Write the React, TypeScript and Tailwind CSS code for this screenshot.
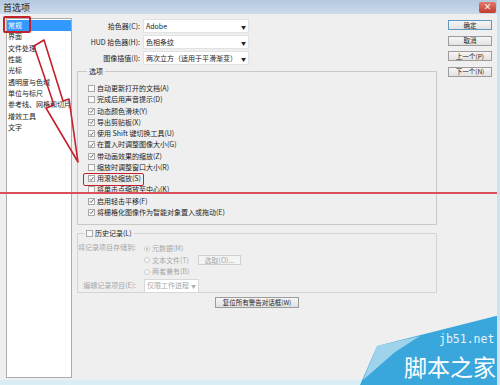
import React from "react";

const navItems = [
  "常规",
  "界面",
  "文件处理",
  "性能",
  "光标",
  "透明度与色域",
  "单位与标尺",
  "参考线、网格和切片",
  "增效工具",
  "文字",
];

const options: [string, boolean][] = [
  ["自动更新打开的文档(A)", false],
  ["完成后用声音提示(D)", false],
  ["动态颜色滑块(Y)", true],
  ["导出剪贴板(X)", true],
  ["使用 Shift 键切换工具(U)", true],
  ["在置入时调整图像大小(G)", true],
  ["带动画效果的缩放(Z)", true],
  ["缩放时调整窗口大小(R)", false],
  ["用滚轮缩放(S)", true],
  ["将单击点缩放至中心(K)", false],
  ["启用轻击平移(F)", true],
  ["将栅格化图像作为智能对象置入或拖动(E)", true],
];

function Check({ on, dim }: { on: boolean; dim?: boolean }) {
  return (
    <span
      className={`flex h-[7px] w-[7px] shrink-0 items-center justify-center border bg-[#fafafa] ${
        dim ? "border-[#c4c4c4]" : "border-[#a9a9a9]"
      }`}
    >
      {on && (
        <svg width="6" height="6" viewBox="0 0 6 6">
          <path d="M0.8 3.2 L2.4 4.8 L5.3 0.9" fill="none" stroke="#555" strokeWidth="1" />
        </svg>
      )}
    </span>
  );
}

function Radio({ on }: { on?: boolean }) {
  return (
    <span className="flex h-[6px] w-[6px] shrink-0 items-center justify-center rounded-full border border-[#cfcfcf] bg-[#f7f7f7]">
      {on && <span className="h-[2px] w-[2px] rounded-full bg-[#b5b5b5]" />}
    </span>
  );
}

function Select({ value, width, dim }: { value: string; width: string; dim?: boolean }) {
  return (
    <div
      className={`flex h-[14px] items-center justify-between border bg-white pl-[2px] pr-[2px] ${width} ${
        dim ? "border-[#d8d8d8] text-[#a8a8a8]" : "border-[#e2e2e2]"
      }`}
    >
      <span className="whitespace-nowrap">{value}</span>
      <span className={`text-[5px] ${dim ? "text-[#b0b0b0]" : "text-[#222]"}`}>▼</span>
    </div>
  );
}

function SideButton({ label, primary }: { label: string; primary?: boolean }) {
  return (
    <div
      className={`flex h-[10px] w-[44px] items-center justify-center border bg-linear-to-b from-[#f6f6f6] to-[#e2e2e2] text-[6.5px] leading-none ${
        primary ? "border-[#5f9ac0]" : "border-[#9c9c9c]"
      }`}
    >
      {label}
    </div>
  );
}

export default function App() {
  return (
    <div className="relative flex h-[385px] w-[500px] flex-col overflow-hidden border-r-[3px] border-[#cde0ee] bg-[#efefef] font-['Noto_Sans_CJK_SC',sans-serif] text-[7px] leading-none text-[#1c1c1c]">
      {/* TITLE BAR */}
      <div className="flex h-[14px] shrink-0 items-center justify-between bg-linear-to-b from-[#b3c8df] to-[#cddaea] pl-[3px] pr-[1px]">
        <span className="text-[9px] text-[#1a1a1a]">首选项</span>
        <div className="flex h-[11px] w-[17px] items-center justify-center rounded-[2px] bg-linear-to-b from-[#e07a6c] to-[#c23a2c] text-[8px] font-bold text-white">
          ×
        </div>
      </div>

      {/* BODY */}
      <div className="flex h-[366px] shrink-0 pt-[4px]">
        {/* LEFT LIST */}
        <div className="ml-[6px] h-[360px] w-[66px] border border-[#acacac] bg-white pt-[1px]">
          {navItems.map((item, i) => (
            <div
              key={item}
              className={`flex h-[11.3px] items-center whitespace-nowrap pl-[1px] ${
                i === 0 ? "bg-[#3399ff] text-white" : ""
              }`}
            >
              {item}
            </div>
          ))}
        </div>

        {/* MAIN */}
        <div className="ml-[5px] flex w-[360px] flex-col pt-[1px]">
          <div className="flex flex-col gap-[2px]">
            {[
              ["拾色器(C):", "Adobe"],
              ["HUD 拾色器(H):", "色相条纹"],
              ["图像插值(I):", "两次立方（适用于平滑渐变）"],
            ].map(([label, value]) => (
              <div key={label} className="flex items-center">
                <span className="w-[63px] whitespace-nowrap text-right">{label}</span>
                <div className="ml-[3px]">
                  <Select value={value} width="w-[106px]" />
                </div>
              </div>
            ))}
          </div>

          {/* OPTIONS GROUP */}
          <div className="relative mt-[6px] h-[154px] border border-[#c9c9c9] pl-[10px] pt-[11px]">
            <span className="absolute -top-[4px] left-[9px] bg-[#efefef] px-[2px]">选项</span>
            {options.map(([label, on]) => (
              <div key={label} className="flex h-[11.25px] items-center gap-[2px] whitespace-nowrap">
                <Check on={on} />
                <span>{label}</span>
              </div>
            ))}
          </div>

          {/* HISTORY GROUP */}
          <div className="relative mt-[8px] h-[60px] border border-[#d4d4d4] pt-[9px] text-[#a8a8a8]">
            <span className="absolute -top-[4px] left-[6px] flex items-center gap-[2px] bg-[#efefef] px-[2px] text-[#1c1c1c]">
              <Check on={false} />
              历史记录(L)
            </span>
            <div className="flex">
              <span className="w-[58px] pt-[1px] text-right whitespace-nowrap">将记录项目存储到:</span>
              <div className="ml-[8px] flex flex-col">
                <div className="flex h-[11.5px] items-center gap-[2px]">
                  <Radio on />
                  <span>元数据(M)</span>
                </div>
                <div className="flex h-[11.5px] items-center gap-[2px]">
                  <Radio />
                  <span>文本文件(T)</span>
                  <div className="ml-[7px] flex h-[10px] w-[43px] items-center justify-center border border-[#d0d0d0] bg-[#f4f4f4]">
                    选取(O)...
                  </div>
                </div>
                <div className="flex h-[11.5px] items-center gap-[2px]">
                  <Radio />
                  <span>两者兼有(B)</span>
                </div>
              </div>
            </div>
            <div className="mt-[1px] flex items-center">
              <span className="w-[58px] text-right whitespace-nowrap">编辑记录项目(E):</span>
              <div className="ml-[8px]">
                <Select value="仅限工作进程" width="w-[55px]" dim />
              </div>
            </div>
          </div>

          <div className="mt-[4px] flex justify-center">
            <div className="flex h-[11px] w-[84px] items-center justify-center border border-[#9c9c9c] bg-linear-to-b from-[#f6f6f6] to-[#e0e0e0] text-[6.5px]">
              复位所有警告对话框(W)
            </div>
          </div>
        </div>

        {/* RIGHT BUTTONS */}
        <div className="ml-[11px] flex flex-col gap-[5.5px] pt-[2px]">
          <SideButton label="确定" primary />
          <SideButton label="取消" />
          <SideButton label="上一个(P)" />
          <SideButton label="下一个(N)" />
        </div>
      </div>

      <div className="h-[5px] shrink-0 bg-[#d9eef4]" />

      {/* ANNOTATIONS */}
      <div className="absolute left-[3px] top-[16px] h-[17px] w-[28px] rounded-[2px] border-2 border-[#c3212b]" />
      <div className="absolute left-[83px] top-[173px] h-[13px] w-[61px] rounded-[2px] border-[1.5px] border-[#c3212b]" />
      <div className="absolute left-0 top-[192px] h-[2px] w-[500px] bg-[#d9505a]" />
      <svg className="pointer-events-none absolute left-0 top-0" width="500" height="385">
        <polygon
          points="34,46 44,40 63,101 69,99 78,162 46,108 54,105"
          fill="none"
          stroke="#c3212b"
          strokeWidth="1.6"
          strokeLinejoin="round"
        />
        <polygon points="360,385 377,346 500,315 500,385" fill="#3aa7dc" />
        <polygon points="363,380 377,346 420,336 395,352" fill="#f2f7fa" opacity="0.55" />
      </svg>
      <span className="absolute left-[439px] top-[334px] font-['DejaVu_Sans_Mono',monospace] text-[11.5px] leading-none text-[#e6f4fb]">
        jb51.net
      </span>
      <span className="absolute left-[404px] top-[355px] text-[23px] leading-none text-white">脚本之家</span>
    </div>
  );
}
